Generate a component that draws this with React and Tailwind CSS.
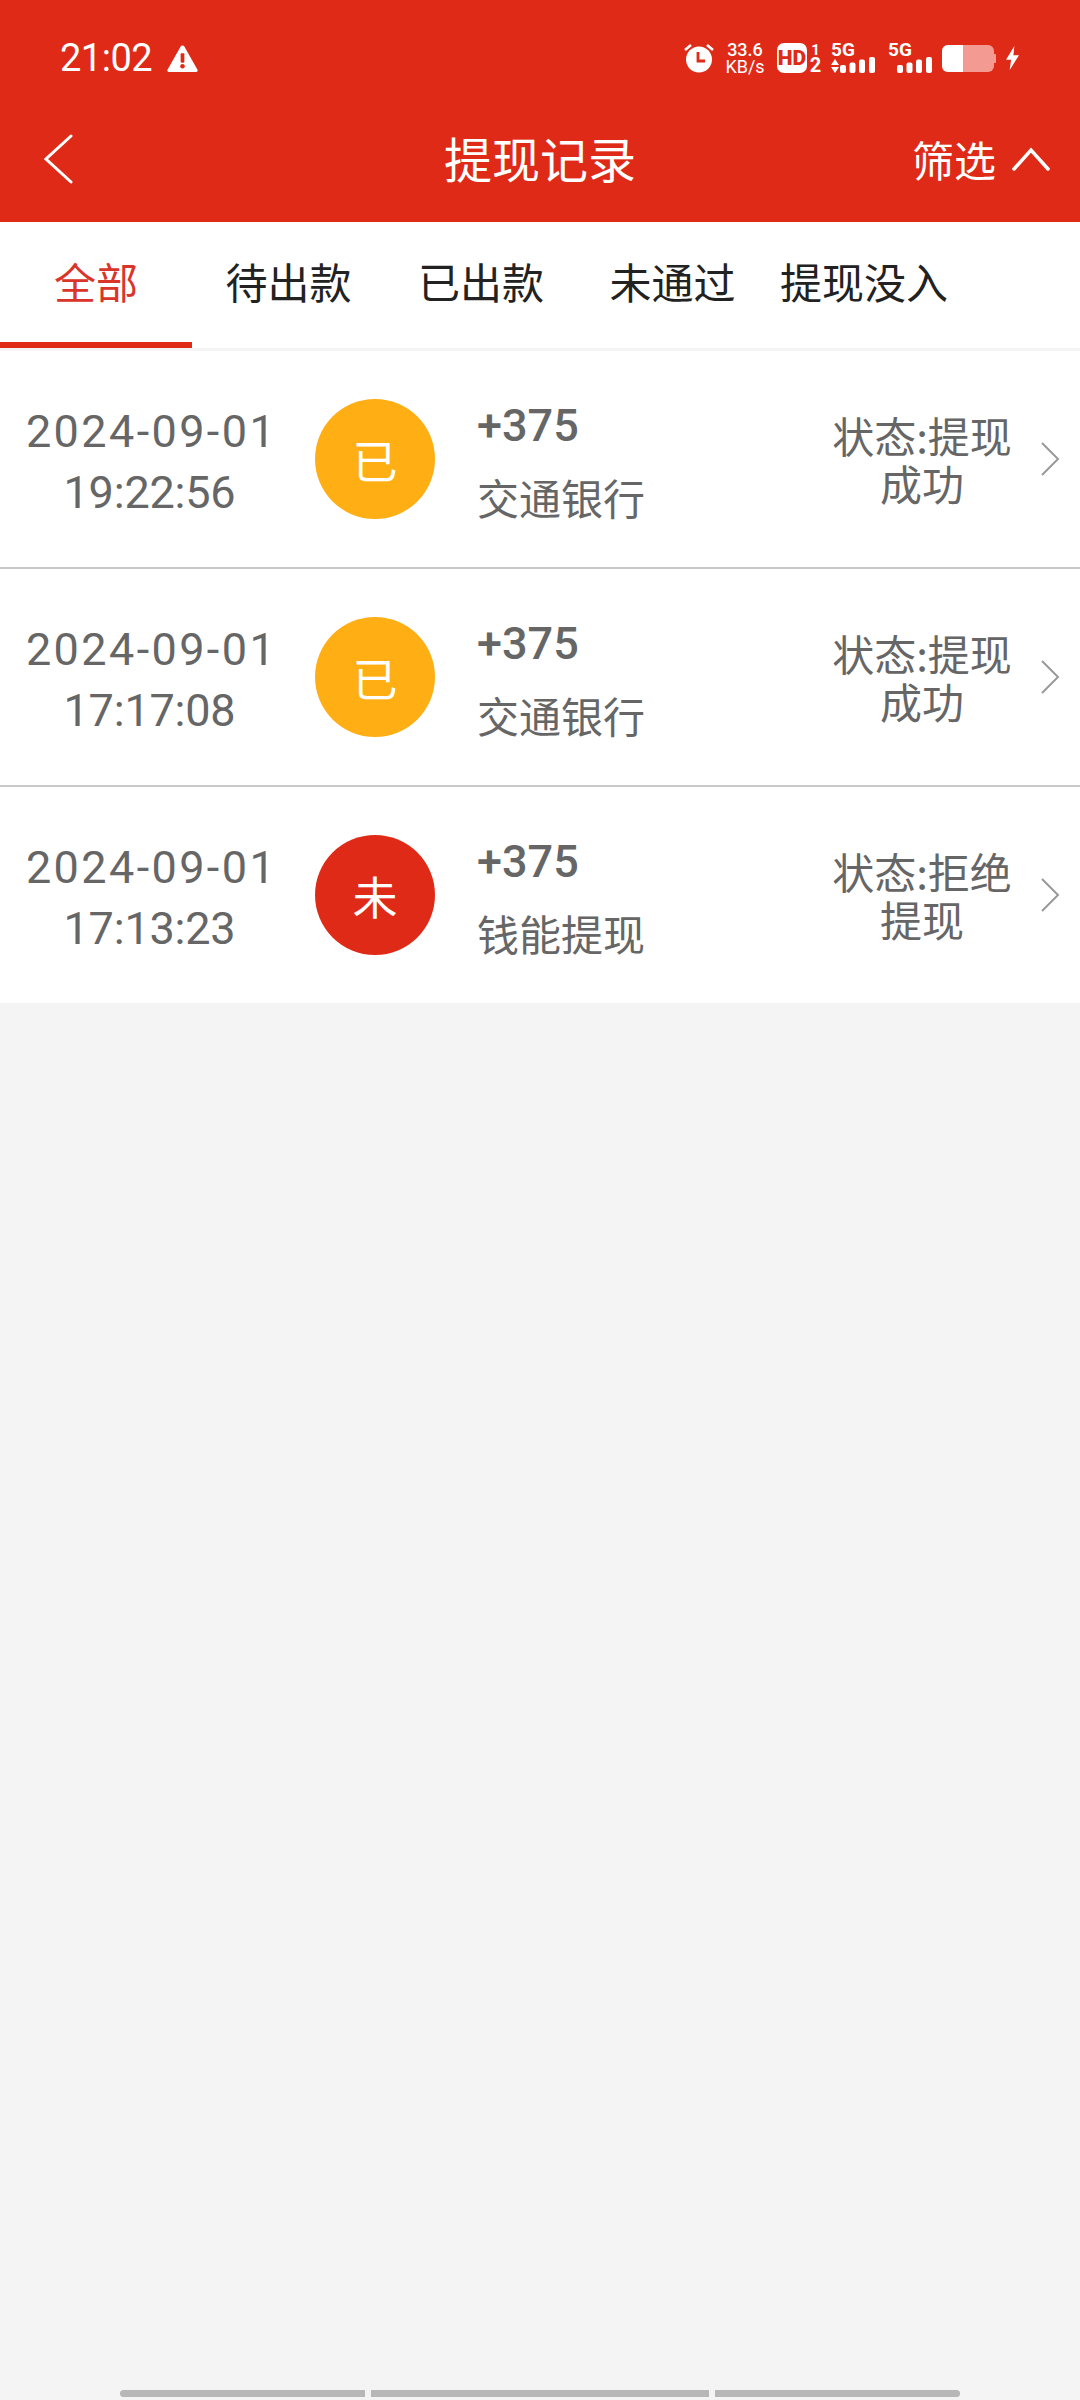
// App.jsx - withdrawal records screen
const cjk = { fontFamily: '"Noto Sans CJK SC", sans-serif' };
const roboto = { fontFamily: "Roboto, sans-serif" };

const tabs = [
  { label: "全部", width: "w-[192px]" },
  { label: "待出款", width: "w-[193px]" },
  { label: "已出款", width: "w-[192px]" },
  { label: "未通过", width: "w-[191px]" },
  { label: "提现没入", width: "w-[192px]" },
];

const records = [
  { date: "2024-09-01", time: "19:22:56", mark: "已", markColor: "bg-[#ffae14]", bank: "交通银行", status: ["状态:提现", "成功"] },
  { date: "2024-09-01", time: "17:17:08", mark: "已", markColor: "bg-[#ffae14]", bank: "交通银行", status: ["状态:提现", "成功"] },
  { date: "2024-09-01", time: "17:13:23", mark: "未", markColor: "bg-[#e02a18]", bank: "钱能提现", status: ["状态:拒绝", "提现"] },
];

const SignalBars = () => (
  <svg width="35" height="16" viewBox="0 0 35 16" fill="white">
    <rect x="0" y="8" width="6" height="8" rx="2" />
    <rect x="9.500" y="5.500" width="6" height="10.500" rx="2" />
    <rect x="19" y="2.500" width="6" height="13.500" rx="2" />
    <rect x="29" y="0" width="6" height="16" rx="2" />
  </svg>
);

const StatusBar = () => (
  <div className="h-[100px] flex items-center justify-between pt-[16px] pl-[60px] pr-[61px] text-white">
    <div className="flex items-center gap-[15px]">
      <span className="text-[38px] leading-none tracking-[-0.5px]" style={roboto}>21:02</span>
      <svg width="31" height="27" viewBox="0 0 30 26" fill="white">
        <path d="M13.200 1.500a2 2 0 0 1 3.600 0l12.700 22.300a1.500 1.500 0 0 1-1.300 2.200H1.800a1.500 1.500 0 0 1-1.300-2.200z" />
        <rect x="13.200" y="8" width="3.600" height="9" rx="1" fill="#e02a18" />
        <circle cx="15" cy="20.500" r="2.200" fill="#e02a18" />
      </svg>
    </div>
    <div className="flex items-center" style={roboto}>
      <svg width="30" height="30" viewBox="0 0 30 30" fill="white" className="mr-[12px]">
        <circle cx="15" cy="16.500" r="13" />
        <path d="M14 9v9h7" fill="none" stroke="#e02a18" strokeWidth="2.800" />
        <path d="M1 7l6-5M29 7l-6-5" stroke="white" strokeWidth="2.600" fill="none" />
      </svg>
      <div className="w-[38px] flex flex-col items-center text-[18px] leading-[17px] mr-[13px]">
        <span className="font-medium">33.6</span>
        <span>KB/s</span>
      </div>
      <div className="w-[30px] h-[30px] bg-white rounded-[7px] flex items-center justify-center text-[#e02a18] text-[21px] leading-none font-black">HD</div>
      <div className="w-[11px] ml-[3px] mr-[10px] flex flex-col items-center font-bold">
        <span className="text-[15px] leading-[14px]">1</span>
        <span className="text-[20px] leading-[16px]">2</span>
      </div>
      <div className="w-[44px] mr-[13px] flex flex-col">
        <span className="text-[19px] leading-[14px] font-bold">5G</span>
        <div className="flex items-end justify-between">
          <svg width="8" height="14" viewBox="0 0 8 14" fill="white">
            <path d="M4 0l4 6H0zM0 8h8l-4 6z" />
          </svg>
          <SignalBars />
        </div>
      </div>
      <div className="w-[44px] mr-[10px] flex flex-col">
        <span className="text-[19px] leading-[14px] font-bold">5G</span>
        <div className="flex justify-end">
          <SignalBars />
        </div>
      </div>
      <div className="flex items-center mr-[10px]">
        <div className="w-[52px] h-[27px] rounded-[6px] bg-[#f39a93] overflow-hidden">
          <div className="w-[21px] h-full bg-white" />
        </div>
        <div className="w-[2px] h-[9px] rounded-r-[1px] bg-[#f39a93]" />
      </div>
      <svg width="13" height="26" viewBox="0 0 14 26" fill="white">
        <path d="M9 0L0 15h5.500L4 26l10-16H8z" />
      </svg>
    </div>
  </div>
);

const TopBar = () => (
  <div className="h-[122px] flex items-center justify-between pl-[44px] pr-[30px] pb-[4px] text-white" style={cjk}>
    <svg width="30" height="50" viewBox="0 0 30 50" fill="none" stroke="white" strokeWidth="3" strokeLinecap="round">
      <path d="M27 2L2 25l25 23" />
    </svg>
    <span className="absolute left-[444px] top-[133px] text-[48px] leading-none">提现记录</span>
    <div className="flex items-center gap-[16px]">
      <span className="text-[42px] leading-none">筛选</span>
      <svg width="38" height="24" viewBox="0 0 38 24" fill="none" stroke="white" strokeWidth="3.500" strokeLinecap="round">
        <path d="M2 22L19 3l17 19" />
      </svg>
    </div>
  </div>
);

const Tabs = () => (
  <div className="h-[126px] bg-white flex" style={cjk}>
    {tabs.map((tab, i) => (
      <div
        key={tab.label}
        className={`${tab.width} flex items-center justify-center text-[42px] leading-none ${
          i === 0 ? "pb-[2px] text-[#d9352a] border-b-[6px] border-[#e02a18]" : "pb-[8px] text-[#222]"
        }`}
      >
        {tab.label}
      </div>
    ))}
  </div>
);

const RecordRow = ({ record, last }) => (
  <div className={`bg-white flex items-center ${last ? "h-[216px]" : "h-[218px] border-b-2 border-[#c9c9c9]"}`}>
    <div className="w-[299px] shrink-0 flex flex-col items-center pt-[5px] text-[#666] text-[45px] leading-[61px]" style={roboto}>
      <span className="ml-[4px] tracking-[2.400px]">{record.date}</span>
      <span className="tracking-[-0.200px]">{record.time}</span>
    </div>
    <div className={`w-[120px] h-[120px] ml-[16px] shrink-0 rounded-full ${record.markColor} flex items-center justify-center text-white text-[45px] leading-none`} style={cjk}>
      {record.mark}
    </div>
    <div className="ml-[42px] w-[300px] shrink-0 flex flex-col pt-[4px] text-[#666]">
      <span className="text-[45px] leading-[60px] font-medium" style={roboto}>+375</span>
      <span className="text-[42px] leading-[60px] mt-[11px]" style={cjk}>{record.bank}</span>
    </div>
    <div className="w-[210px] ml-[40px] shrink-0 flex flex-col items-center text-[#666] text-[42px] leading-[48px]" style={cjk}>
      <span>{record.status[0]}</span>
      <span>{record.status[1]}</span>
    </div>
    <svg width="20" height="34" viewBox="0 0 20 34" fill="none" stroke="#999" strokeWidth="2" className="ml-[13px]">
      <path d="M2 1l16 16L2 33" />
    </svg>
  </div>
);

const ScrollBar = () => (
  <div className="flex gap-[6px] justify-center pb-[3px]">
    <div className="w-[245px] h-[7px] bg-[#b7b7b7] rounded-l-full" />
    <div className="w-[338px] h-[7px] bg-[#b7b7b7]" />
    <div className="w-[245px] h-[7px] bg-[#b7b7b7] rounded-r-full" />
  </div>
);

const App = () => {
  return (
    <div className="w-[1080px] h-[2400px] bg-[#f4f4f4] flex flex-col relative overflow-hidden">
      <div className="bg-[#e02a18]">
        <StatusBar />
        <TopBar />
      </div>
      <Tabs />
      <div className="h-[3px] bg-[#f4f4f4]" />
      <div>
        {records.map((record, i) => (
          <RecordRow key={record.time} record={record} last={i === records.length - 1} />
        ))}
      </div>
      <div className="flex-1" />
      <ScrollBar />
    </div>
  );
};

export default App;
